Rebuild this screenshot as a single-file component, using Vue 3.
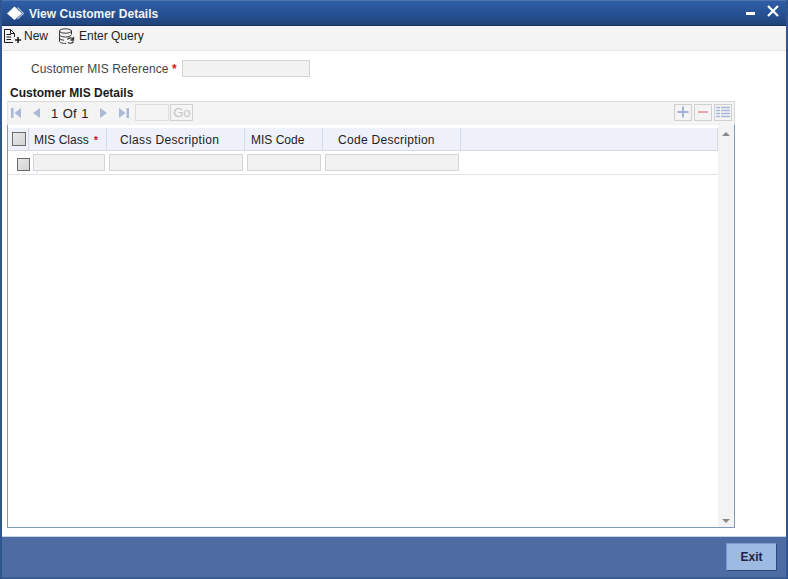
<script setup>
const heads = [
  { label: 'MIS Class', cls: 'c1', req: true },
  { label: 'Class Description', cls: 'c2' },
  { label: 'MIS Code', cls: 'c3' },
  { label: 'Code Description', cls: 'c4' },
]
const cells = ['w1', 'w2', 'w3', 'w2']
</script>

<template>
  <div class="win">
    <header class="title">
      <svg class="logo" width="20" height="20" viewBox="0 0 20 20">
        <path d="M8.500 3.500 L16 10.500 L8.500 17 L1 10.500 Z" fill="#fff"/>
        <path d="M11.500 4.500 L17.500 10.500 L11.500 16" fill="none" stroke="#a9bfdf" stroke-width="1.100"/>
      </svg>
      <span class="title-text">View Customer Details</span>
      <span class="controls">
        <svg class="minimize" width="10" height="4" viewBox="0 0 10 4"><rect width="9" height="3" fill="#fff"/></svg>
        <svg class="close" width="12" height="12" viewBox="0 0 12 12"><path d="M1 1 L11 11 M11 1 L1 11" stroke="#fff" stroke-width="2.200"/></svg>
      </span>
    </header>

    <nav class="tools">
      <span class="tool">
        <svg width="18" height="16" viewBox="0 0 18 16" fill="none" stroke="#1c1c1c" stroke-width="1">
          <path d="M0.500 1.500H6.500L10.500 5.500V9M0.500 1.500V14.500H9M6.500 1.500V5.500H10.500"/>
          <path d="M2.500 6.500H7M2.500 9H7M2.500 11.500H7"/>
          <path d="M14 9V15M11 12H17" stroke-width="1.600"/>
        </svg>
        New
      </span>
      <span class="tool query">
        <svg width="18" height="17" viewBox="0 0 18 17" fill="none" stroke="#333" stroke-width="1">
          <ellipse cx="7.500" cy="3" rx="6" ry="2.200"/>
          <path d="M1.500 3V13C1.500 14.500 4 15.500 8 15.500M13.500 3V6M1.500 6.500C1.500 8 4 9 7.500 9S13 8 13.500 6.500M1.500 10C1.500 11.300 3.500 12 6 12.200"/>
          <path d="M9.500 11.500C10.500 9.500 14 9 15.500 11.500M15.500 9V12H12.500M15.500 13.500C14 15.500 11.500 15.500 10 14.500" stroke-width="1.300"/>
        </svg>
        Enter Query
      </span>
    </nav>

    <main class="body">
      <div class="ref-row">
        <label class="ref-label">Customer MIS Reference <b class="req">*</b></label>
        <span class="field ref-field"></span>
      </div>
      <h2 class="section">Customer MIS Details</h2>

      <section class="grid">
        <div class="pager">
          <span class="pg">
            <svg width="12" height="12" viewBox="0 0 12 12"><path d="M1 1H3.500V11H1ZM11 1V11L4.500 6Z" fill="#a9bad8"/></svg>
          </span>
          <span class="pg pg2">
            <svg width="9" height="12" viewBox="0 0 9 12"><path d="M8 1V11L1 6Z" fill="#a9bad8"/></svg>
          </span>
          <span class="count">1 Of 1</span>
          <span class="pg pg3">
            <svg width="9" height="12" viewBox="0 0 9 12"><path d="M1 1V11L8 6Z" fill="#a9bad8"/></svg>
          </span>
          <span class="pg pg4">
            <svg width="12" height="12" viewBox="0 0 12 12"><path d="M1 1V11L7.500 6ZM8.500 1H11V11H8.500Z" fill="#a9bad8"/></svg>
          </span>
          <span class="field page-input"></span>
          <span class="go">Go</span>
          <span class="actions">
            <span class="act">
              <svg width="14" height="14" viewBox="0 0 14 14"><path d="M7 1.500V12.500M1.500 7H12.500" stroke="#a3b3d6" stroke-width="2"/></svg>
            </span>
            <span class="act">
              <svg width="14" height="14" viewBox="0 0 14 14"><path d="M2 7H12" stroke="#eaa6ab" stroke-width="2"/></svg>
            </span>
            <span class="act">
              <svg width="16" height="14" viewBox="0 0 16 14" fill="none"><path d="M1 2.500H15M1 5.500H15M1 8.500H15M1 11.500H15" stroke="#a9b8da" stroke-width="1.600"/><path d="M5.500 1.500V13" stroke="#f4f4f4" stroke-width="1"/></svg>
            </span>
          </span>
        </div>

        <div class="table-wrap">
          <div class="table">
            <div class="head">
              <span class="chk-col"><span class="chk"></span></span>
              <span v-for="h in heads" :key="h.label" class="th" :class="h.cls">
                {{ h.label }}<b v-if="h.req" class="req small">*</b>
              </span>
            </div>
            <div class="row">
              <span class="body-chk"><span class="chk"></span></span>
              <span class="inputs">
                <span v-for="(c, i) in cells" :key="i" class="field cell" :class="c"></span>
              </span>
            </div>
          </div>
          <div class="scroll">
            <svg width="10" height="6" viewBox="0 0 10 6"><path d="M5 1L9 5H1Z" fill="#8a8a8a"/></svg>
            <svg width="10" height="6" viewBox="0 0 10 6"><path d="M5 5L9 1H1Z" fill="#8a8a8a"/></svg>
          </div>
        </div>
      </section>
    </main>

    <footer class="foot">
      <button class="exit">Exit</button>
    </footer>
  </div>
</template>

<style>
html, body { margin: 0; background: #fff; }
</style>

<style scoped>
.win {
  width: 788px;
  height: 579px;
  box-sizing: border-box;
  display: flex;
  flex-direction: column;
  border-left: 2px solid #31568f;
  border-right: 2px solid #31568f;
  font-family: "Liberation Sans", Arial, sans-serif;
  font-size: 12.5px;
  color: #222;
  overflow: hidden;
}
.title {
  height: 26px;
  flex: none;
  box-sizing: border-box;
  display: flex;
  align-items: center;
  padding: 0 7px 0 4px;
  border-top: 1px solid #4f74ad;
  border-bottom: 1px solid #17315f;
  background: linear-gradient(#2f5ea6, #264f90 60%, #1f4279);
  color: #fff;
}
.logo { margin-right: 3px; }
.title-text { font-weight: bold; font-size: 12px; color: #f0f4fa; padding-top: 1px; }
.controls { margin-left: auto; display: flex; align-items: flex-start; gap: 11px; height: 18px; }
.minimize { margin-top: 8px; }
.close { margin-top: 1px; }
.tools {
  height: 25px;
  flex: none;
  box-sizing: border-box;
  display: flex;
  align-items: center;
  gap: 10px;
  padding: 0 0 4px 2px;
  background: #f4f4f4;
  border-bottom: 1px solid #e6e6e6;
  font-size: 12px;
  color: #222;
}
.tool { display: flex; align-items: center; gap: 2px; }
.query { gap: 3px; }
.body {
  flex: 1;
  min-height: 0;
  padding: 0 0 8px 5px;
  display: flex;
  flex-direction: column;
  background: #fff;
}
.ref-row { display: flex; align-items: flex-start; height: 17px; margin-top: 9px; padding-left: 24px; }
.ref-label { color: #444; font-size: 12px; line-height: 19px; letter-spacing: 0.1px; }
.req { color: #d11; font-weight: bold; }
.req.small { font-size: 11px; margin-left: 5px; }
.field {
  display: block;
  box-sizing: border-box;
  background: #f2f2f2;
  border: 1px solid #d4d4d4;
}
.ref-field { width: 128px; height: 17px; margin-left: 5px; }
.section { margin: 7px 0 0 3px; height: 17px; line-height: 19px; font-size: 12px; font-weight: bold; color: #1a1a1a; }
.grid { flex: 1; min-height: 0; width: 728px; display: flex; flex-direction: column; }
.pager {
  height: 24px;
  flex: none;
  box-sizing: border-box;
  display: flex;
  align-items: center;
  background: #f4f4f4;
  border-top: 1px solid #d8d8d8;
  border-right: 1px solid #d8d8d8;
  border-left: 1px solid #e4e4e4;
  padding: 0 0 2px 2px;
}
.pg { display: flex; }
.pg2 { margin-left: 10px; }
.pg3 { margin-left: 11px; }
.pg4 { margin-left: 10px; }
.count { margin-left: 10px; margin-top: 1px; font-size: 13px; word-spacing: 1px; color: #222; }
.page-input { width: 34px; height: 17px; margin-left: 5px; background: #f4f4f4; border-color: #dedede; }
.go {
  box-sizing: border-box;
  width: 23px; height: 17px; margin-left: 1px;
  border: 1px solid #d0d0d0;
  color: #c4c4c4; font-size: 13px; text-align: center; line-height: 16px;
}
.actions { margin-left: auto; display: flex; gap: 2px; padding-right: 2px; margin-top: -1px; }
.act {
  box-sizing: border-box;
  width: 18px; height: 17px;
  border: 1px solid #d0d0d0;
  display: flex; align-items: center; justify-content: center;
}
.table-wrap {
  flex: 1; min-height: 0;
  display: flex;
  border: 1px solid #7f9db9;
  border-top: 0;
  background: #fff;
}
.table { flex: 1; min-width: 0; padding-top: 3px; }
.head {
  height: 23px;
  box-sizing: border-box;
  display: flex;
  background: #eef1fa;
  border-bottom: 1px solid #d4dbe6;
  border-right: 1px solid #d4dbe6;
}
.chk-col { width: 21px; flex: none; box-sizing: border-box; display: flex; align-items: center; padding-left: 4px; border-right: 1px solid #d4dbe6; }
.chk {
  width: 12px; height: 12px;
  border: 1px solid #6d6d6d;
  background: linear-gradient(135deg, #e9e9e9, #d2d2d2);
  display: block;
}
.th {
  box-sizing: border-box;
  display: block;
  flex: none;
  height: 22px;
  line-height: 24px;
  font-size: 12px;
  color: #222;
  border-right: 1px solid #d4dbe6;
  white-space: nowrap;
}
.c1 { width: 78px; padding-left: 5px; }
.c2 { width: 138px; padding-left: 13px; letter-spacing: 0.35px; }
.c3 { width: 78px; padding-left: 6px; }
.c4 { width: 138px; padding-left: 15px; letter-spacing: 0.3px; }
.row {
  height: 24px;
  box-sizing: border-box;
  display: flex;
  border-bottom: 1px solid #dfe4ec;
}
.body-chk { width: 30px; flex: none; box-sizing: border-box; padding: 7px 0 0 9px; border-right: 1px solid #e4e8ef; }
.body-chk .chk { width: 11px; height: 11px; }
.inputs { display: flex; gap: 4px; align-items: flex-start; padding-top: 3px; margin-left: -5px; position: relative; }
.cell { height: 17px; }
.w1 { width: 72px; }
.w2 { width: 134px; }
.w3 { width: 74px; }
.scroll {
  width: 16px; flex: none;
  box-sizing: border-box;
  background: #f3f3f3;
  display: flex; flex-direction: column; justify-content: space-between; align-items: center;
  padding: 6px 0 3px;
}
.foot {
  height: 43px;
  flex: none;
  box-sizing: border-box;
  display: flex;
  justify-content: flex-end;
  align-items: flex-start;
  padding: 6px 9px 0 0;
  background: #4d6ca3;
  border-top: 1px solid #c6d2e6;
  border-bottom: 2px solid #3a5a92;
}
.exit {
  width: 51px; height: 28px;
  background: #9dbae3;
  border: 1px solid #7d9bc6;
  border-bottom-color: #2f4a7c;
  border-right-color: #2f4a7c;
  font-family: inherit;
  font-size: 12px;
  font-weight: bold;
  color: #1c2440;
  padding: 0 0 1px;
}
</style>
